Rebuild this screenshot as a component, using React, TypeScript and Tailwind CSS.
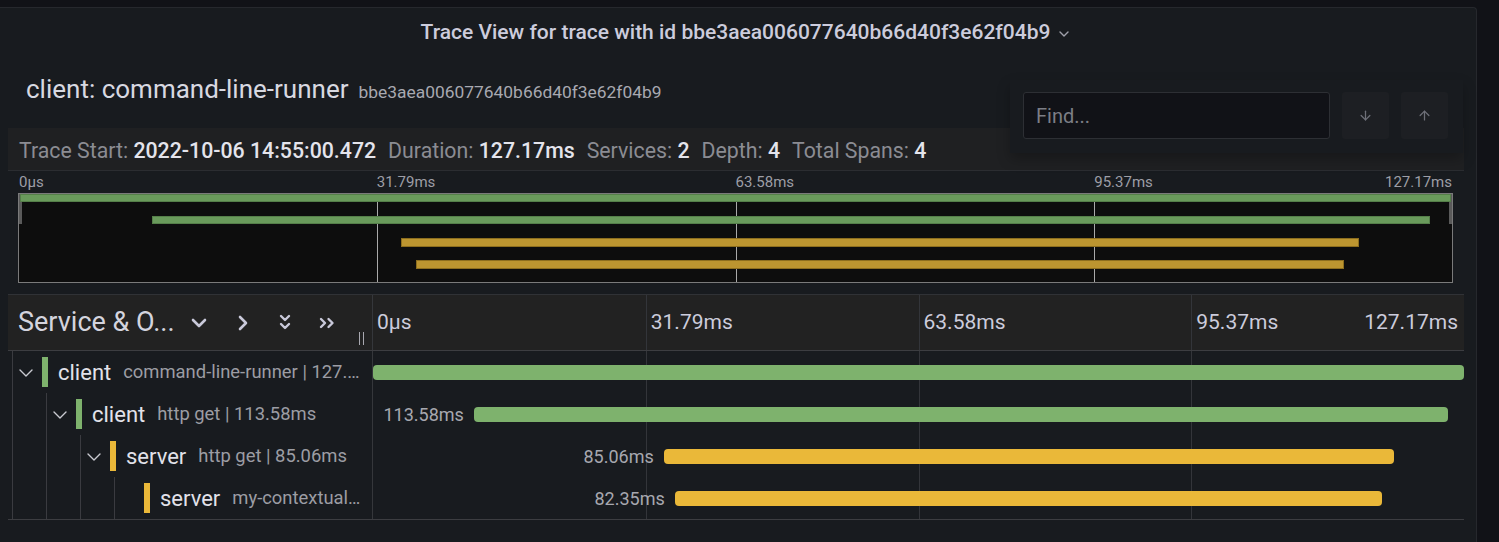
import React from 'react';
import { ArrowDown, ArrowUp } from 'lucide-react';

interface Span {
  service: string;
  operation: string;
  depth: number;
  color: 'green' | 'yellow';
  start: number;
  end: number;
  label?: string;
  hasChildren: boolean;
}

const spans: Span[] = [
  { service: 'client', operation: 'command-line-runner | 127.17ms', depth: 0, color: 'green', start: 0, end: 1, hasChildren: true },
  { service: 'client', operation: 'http get | 113.58ms', depth: 1, color: 'green', start: 0.0925, end: 0.9856, label: '113.58ms', hasChildren: true },
  { service: 'server', operation: 'http get | 85.06ms', depth: 2, color: 'yellow', start: 0.2665, end: 0.9359, label: '85.06ms', hasChildren: true },
  { service: 'server', operation: 'my-contextual-span | 82.35ms', depth: 3, color: 'yellow', start: 0.2766, end: 0.9249, label: '82.35ms', hasChildren: false },
];

const ticks = ['0μs', '31.79ms', '63.58ms', '95.37ms'];

const RowChevron = () => (
  <svg width="14" height="8" viewBox="0 0 14 8" fill="none">
    <path d="M1 1L7 7L13 1" stroke="#c9cad1" strokeWidth="1.4" strokeLinecap="round" strokeLinejoin="round" />
  </svg>
);

const HeaderIcons = () => (
  <div className="flex items-center text-[#c9c9da]">
    <svg className="ml-[16px]" width="16" height="10" viewBox="0 0 16 10" fill="none">
      <path d="M2 2L8 8L14 2" stroke="currentColor" strokeWidth="2.6" strokeLinecap="round" strokeLinejoin="round" />
    </svg>
    <svg className="ml-[31px]" width="10" height="16" viewBox="0 0 10 16" fill="none">
      <path d="M2 2L8 8L2 14" stroke="currentColor" strokeWidth="2.6" strokeLinecap="round" strokeLinejoin="round" />
    </svg>
    <svg className="ml-[31px]" width="12" height="17" viewBox="0 0 12 17" fill="none">
      <path d="M2 2L6 6L10 2M2 10L6 14L10 10" stroke="currentColor" strokeWidth="2.4" strokeLinecap="round" strokeLinejoin="round" />
    </svg>
    <svg className="ml-[28px]" width="17" height="12" viewBox="0 0 17 12" fill="none">
      <path d="M2 2L6 6L2 10M9.5 2L13.5 6L9.5 10" stroke="currentColor" strokeWidth="2.4" strokeLinecap="round" strokeLinejoin="round" />
    </svg>
  </div>
);

const StatItem = ({ label, value }: { label: string; value: string }) => (
  <span className="mr-[12px] whitespace-nowrap">
    <span className="text-[#8b8c93]">{label} </span>
    <span className="font-medium text-[#e4e4ec]">{value}</span>
  </span>
);

const Minimap = () => (
  <div>
    <div className="ml-[10px] w-[1435px] h-[22px] grid grid-cols-4 text-[15px] leading-[22px] text-[#9d9ea6]">
      {ticks.map((t, i) => (
        <div key={t} className={i === 0 ? 'pl-[1px]' : ''}>
          {i === 3 ? (
            <div className="flex justify-between">
              <span>{t}</span>
              <span className="pr-[1px]">127.17ms</span>
            </div>
          ) : (
            t
          )}
        </div>
      ))}
    </div>
    <div className="ml-[10px] w-[1435px] h-[90px] border border-[#7a7a7a] bg-[#0d0d0d] relative">
      <div className="absolute inset-0 grid grid-cols-4">
        <div />
        <div className="border-l border-[#a9a9a9]" />
        <div className="border-l border-[#a9a9a9]" />
        <div className="border-l border-[#a9a9a9]" />
      </div>
      <div className="absolute left-0 top-0 w-[3px] h-[30px] bg-[#5a5a5a]" />
      <div className="absolute right-0 top-0 w-[3px] h-[30px] bg-[#5a5a5a]" />
      <div className="relative flex flex-col px-[1px]">
        {spans.map((s, i) => (
          <div key={i} className="h-[22px] flex">
            <div
              className={
                s.color === 'green'
                  ? 'h-[8px] bg-[#699a5b] border border-[#557f49]'
                  : 'h-[9px] bg-[#bc9530] border border-[#8d6e1e]'
              }
              style={{ marginLeft: `${s.start * 100}%`, width: `${(s.end - s.start) * 100}%` }}
            />
          </div>
        ))}
      </div>
    </div>
  </div>
);

const SpanRow = ({ span }: { span: Span }) => {
  const guides = Array.from({ length: span.depth });
  return (
    <div className="h-[42px] flex">
      <div className="w-[365px] shrink-0 border-r border-[#35373b] flex pl-[4px] pr-[10px]">
        {guides.map((_, i) => (
          <div key={i} className="w-[34px] shrink-0 border-l border-[#3a3b40]" />
        ))}
        <div className="w-[30px] shrink-0 border-l border-[#3a3b40] flex items-center pl-[6px] pt-[1px]">
          {span.hasChildren && <RowChevron />}
        </div>
        <div className="flex items-center min-w-0">
          <div className={span.color === 'green' ? 'w-[6px] h-[30px] shrink-0 bg-[#7eb26d]' : 'w-[6px] h-[30px] shrink-0 bg-[#eab839]'} />
          <span className="ml-[10px] text-[22px] text-[#e2e2ea] whitespace-nowrap">{span.service}</span>
          <span className="ml-[12px] text-[18.4px] text-[#9c9da4] whitespace-nowrap overflow-hidden text-ellipsis min-w-0">
            {span.operation}
          </span>
        </div>
      </div>
      <div className="flex-1 flex items-center">
        {span.label ? (
          <div
            className="shrink-0 flex justify-end pr-[10px] text-[18px] text-[#a7a8af] whitespace-nowrap"
            style={{ width: `${span.start * 100}%` }}
          >
            {span.label}
          </div>
        ) : (
          <div className="shrink-0" style={{ width: `${span.start * 100}%` }} />
        )}
        <div
          className={span.color === 'green' ? 'h-[15px] rounded-[4px] bg-[#7eb26d]' : 'h-[15px] rounded-[4px] bg-[#eab839]'}
          style={{ width: `${(span.end - span.start) * 100}%` }}
        />
      </div>
    </div>
  );
};

export default function App() {
  return (
    <div className="min-h-screen bg-[#111217] pt-[7px] font-['Roboto','Liberation_Sans',sans-serif]">
      <div className="relative w-[1477px] h-[540px] bg-[#181b1f] border border-l-0 border-b-0 border-[#26282d] rounded-tr-[4px]">
        <div className="h-[49px] flex items-center justify-center gap-[9px] pl-[14px]">
          <span className="text-[21px] font-medium text-[#ccccdc]">
            Trace View for trace with id bbe3aea006077640b66d40f3e62f04b9
          </span>
          <svg width="10" height="7" viewBox="0 0 10 7" fill="none" className="mt-[3px]">
            <path d="M1 1L5 5L9 1" stroke="#9fa0aa" strokeWidth="1.4" strokeLinecap="round" strokeLinejoin="round" />
          </svg>
        </div>

        <div className="pl-[8px] pr-[12px]">
          <div className="h-[71px] flex items-center pl-[18px] pb-[6px]">
            <div className="flex items-baseline">
              <span className="text-[26px] text-[#d8d9e1]">client: command-line-runner</span>
              <span className="ml-[10px] text-[17.4px] text-[#a8a9b1]">bbe3aea006077640b66d40f3e62f04b9</span>
            </div>
          </div>

          <div className="h-[43px] bg-[#1f2022] border-b border-[#2b2d31] flex items-center pl-[11px] pt-[3px] text-[21.3px]">
            <StatItem label="Trace Start:" value="2022-10-06 14:55:00.472" />
            <StatItem label="Duration:" value="127.17ms" />
            <StatItem label="Services:" value="2" />
            <StatItem label="Depth:" value="4" />
            <StatItem label="Total Spans:" value="4" />
          </div>

          <Minimap />

          <div className="mt-[11px] border-t border-[#303236]">
            <div className="h-[56px] flex bg-[#222222] border-b border-[#3c3d41]">
              <div className="relative w-[365px] shrink-0 border-r border-[#35373b] flex items-center pl-[10px]">
                <span className="text-[27px] text-[#d4d4de] whitespace-nowrap">Service &amp; O...</span>
                <HeaderIcons />
                <div className="absolute right-[8px] bottom-[5px] flex gap-[3px]">
                  <div className="w-px h-[13px] bg-[#a8a8b0]" />
                  <div className="w-px h-[13px] bg-[#a8a8b0]" />
                </div>
              </div>
              <div className="flex-1 grid grid-cols-4 text-[21px] text-[#ccccdc]">
                {ticks.map((t, i) => (
                  <div key={t} className={i === 0 ? 'flex items-center pl-[4px]' : 'flex items-center pl-[4px] border-l border-[#33353a]'}>
                    {i === 3 ? (
                      <div className="flex-1 flex justify-between pr-[6px]">
                        <span>{t}</span>
                        <span>127.17ms</span>
                      </div>
                    ) : (
                      t
                    )}
                  </div>
                ))}
              </div>
            </div>

            <div className="relative border-b border-[#3c3d41]">
              <div className="absolute top-0 bottom-0 left-[365px] right-0 grid grid-cols-4">
                <div />
                <div className="border-l border-[#33353a]" />
                <div className="border-l border-[#33353a]" />
                <div className="border-l border-[#33353a]" />
              </div>
              <div className="relative">
                {spans.map((s, i) => (
                  <SpanRow key={i} span={s} />
                ))}
              </div>
            </div>
          </div>
        </div>

        <div className="absolute top-[72px] left-[1010px] w-[453px] h-[73px] bg-[#181b1f] shadow-[0_6px_12px_rgba(0,0,0,0.25)] flex items-start gap-[12px] pt-[12px] pl-[13px]">
          <div className="w-[307px] h-[47px] bg-[#111217] border border-[#2d2f34] rounded-[3px] flex items-center pl-[12px] text-[20px] text-[#7c7e86]">
            Find...
          </div>
          <button className="w-[47px] h-[47px] bg-[#1d1f23] rounded-[3px] flex items-center justify-center text-[#6e7079]">
            <ArrowDown size={15} strokeWidth={2} />
          </button>
          <button className="w-[47px] h-[47px] bg-[#1d1f23] rounded-[3px] flex items-center justify-center text-[#6e7079]">
            <ArrowUp size={15} strokeWidth={2} />
          </button>
        </div>
      </div>
    </div>
  );
}
